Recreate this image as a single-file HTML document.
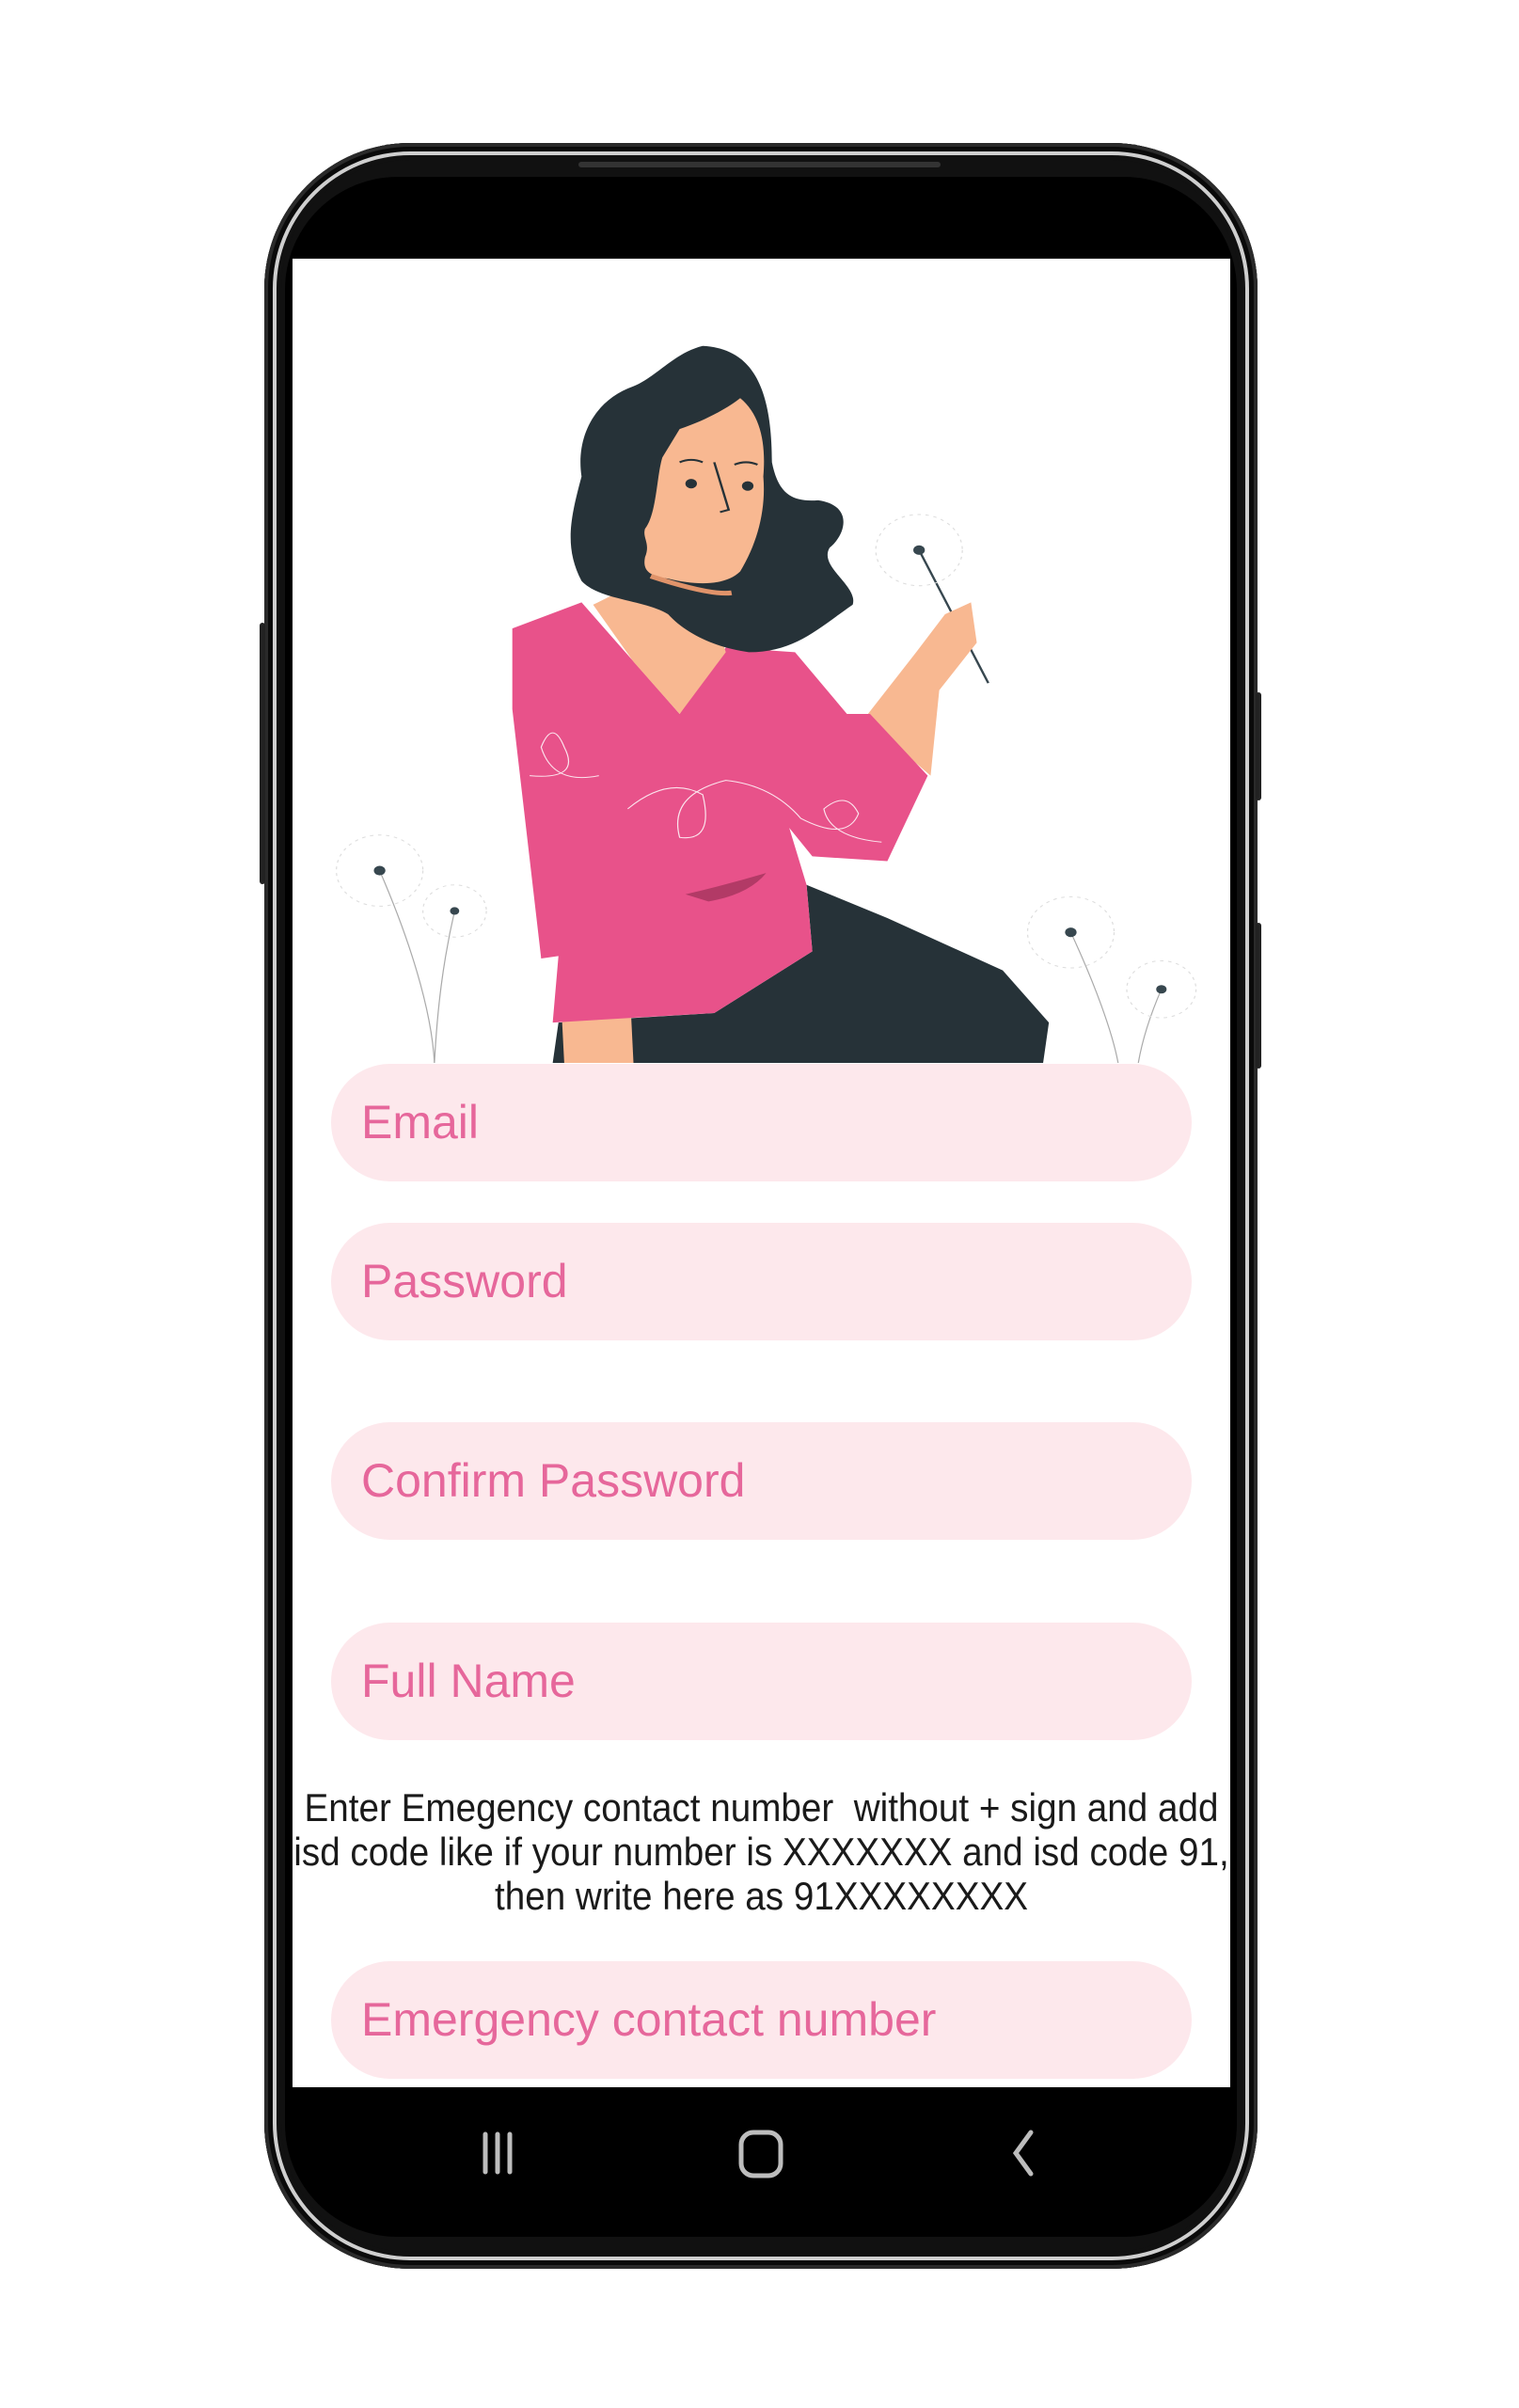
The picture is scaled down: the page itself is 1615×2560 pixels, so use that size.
<!DOCTYPE html>
<html><head><meta charset="utf-8">
<style>
html,body{margin:0;padding:0;background:#fff;}
body{width:1615px;height:2560px;position:relative;overflow:hidden;font-family:"Liberation Sans",sans-serif;}
.phone{position:absolute;left:281px;top:152px;width:1056px;height:2260px;border-radius:155px;background:#111;box-shadow:inset 0 0 0 4px #2a2a2a,inset 0 0 0 9px #0a0a0a,inset 0 0 0 13px #cfcfcf,inset 0 0 0 18px #111;}
.bezel{position:absolute;left:303px;top:188px;width:1012px;height:2190px;border-radius:120px;background:#000;}
.screen{position:absolute;left:311px;top:275px;width:997px;height:1944px;background:#fff;overflow:hidden;}
.field{position:absolute;left:41px;width:915px;height:125px;border-radius:63px;background:#fde8ec;color:#e6679b;font-size:50px;line-height:125px;padding-left:32px;box-sizing:border-box;font-family:"Liberation Sans",sans-serif;}
.help{position:absolute;left:-100px;width:1197px;text-align:center;color:#1a1a1a;font-size:42px;line-height:47px;white-space:pre;}
.help div{transform:scaleX(0.92);}
</style></head><body>
<div class="phone"></div>
<div style="position:absolute;left:276px;top:662px;width:6px;height:278px;background:#222;border-radius:3px"></div>
<div style="position:absolute;left:1335px;top:736px;width:6px;height:115px;background:#222;border-radius:3px"></div>
<div style="position:absolute;left:1335px;top:981px;width:6px;height:155px;background:#222;border-radius:3px"></div>
<div class="bezel"></div>
<div style="position:absolute;left:615px;top:172px;width:385px;height:6px;background:#333;border-radius:3px"></div>
<div class="screen">
<svg style="position:absolute;left:19px;top:65px" width="960" height="790" viewBox="0 0 1565 1565" preserveAspectRatio="none">
 <g stroke="#aaa" stroke-width="2" fill="none">
  <path d="M120 1160 C170 1300 210 1450 215 1565"/><path d="M250 1245 C230 1350 220 1450 215 1565"/>
  <path d="M1318 1290 C1360 1400 1390 1500 1400 1565"/><path d="M1475 1410 C1450 1480 1440 1530 1435 1565"/>
  <path d="M1055 485 L1175 765" stroke="#37474f" stroke-width="4"/>
  <circle cx="120" cy="1160" r="75" stroke="#ddd" stroke-dasharray="6 8"/>
  <circle cx="250" cy="1245" r="55" stroke="#ddd" stroke-dasharray="6 8"/>
  <circle cx="1318" cy="1290" r="75" stroke="#ddd" stroke-dasharray="6 8"/>
  <circle cx="1475" cy="1410" r="60" stroke="#ddd" stroke-dasharray="6 8"/>
  <circle cx="1055" cy="485" r="75" stroke="#ddd" stroke-dasharray="6 8"/>
 </g>
 <g fill="#37474f"><circle cx="120" cy="1160" r="10"/><circle cx="250" cy="1245" r="8"/><circle cx="1318" cy="1290" r="10"/><circle cx="1475" cy="1410" r="9"/><circle cx="1055" cy="485" r="10"/></g>
 <path fill="#263238" d="M860 1190 L1000 1260 L1200 1370 L1280 1480 L1270 1565 L420 1565 L430 1480 L700 1460 L870 1330Z"/>
 <path fill="#f8b891" d="M430 1330 L550 1320 L560 1565 L440 1565Z"/>
 <path fill="#f8b891" d="M960 840 L1050 700 L1100 620 L1145 595 L1155 680 L1090 780 L1075 960Z"/>
 <path fill="#e8528a" d="M350 650 L470 595 L640 830 L720 690 L840 700 L930 830 L970 830 L1070 960 L1000 1140 L870 1130 L830 1070 L860 1190 L870 1330 L700 1460 L420 1480 L430 1340 L400 1345 L350 820Z"/>
 <path fill="#b23a66" d="M650 1210 Q720 1190 790 1165 Q760 1210 690 1225Z"/>
 <path fill="#f8b891" d="M490 600 L590 540 L700 620 L720 700 L640 830 L560 720Z"/>
 <path fill="#263238" d="M680 55 C760 60 800 130 800 300 C810 360 830 385 880 380 C940 390 930 450 900 480 C880 520 950 560 940 600 C880 650 840 700 760 700 C700 690 650 660 620 620 C580 590 500 590 470 550 C440 480 450 420 470 330 C460 250 490 170 560 140 C600 120 630 70 680 55Z"/>
 <path fill="#f8b891" d="M640 230 C690 210 730 180 745 165 C780 200 790 260 785 330 C790 400 775 470 745 530 C720 560 670 560 620 545 C590 540 575 530 580 500 C590 470 575 460 580 440 C600 410 600 330 610 290Z"/>
 <path d="M590 540 C640 560 700 580 730 575" stroke="#e0936a" stroke-width="10" fill="none"/>
 <g fill="#263238"><circle cx="660" cy="345" r="10"/><circle cx="758" cy="350" r="10"/></g>
 <path d="M700 300 L725 400 L710 405 M640 300 Q660 290 680 300 M735 305 Q755 295 775 305" stroke="#263238" stroke-width="4" fill="none"/>
 <g stroke="#fff" stroke-width="2" fill="none" opacity=".85">
  <path d="M380 960 Q470 970 440 900 Q420 840 400 900 Q420 980 500 960"/>
  <path d="M550 1030 Q620 960 680 1000 Q700 1100 640 1090 Q620 1000 720 970 Q800 980 850 1050 Q930 1100 950 1040 Q930 990 890 1030 Q900 1090 990 1100"/>
 </g>
</svg>
<div class="field" style="top:856px">Email</div>
<div class="field" style="top:1025px">Password</div>
<div class="field" style="top:1237px">Confirm Password</div>
<div class="field" style="top:1450px">Full Name</div>
<div class="help" style="top:1623px"><div>Enter Emegency contact number  without + sign and add</div><div>isd code like if your number is XXXXXXX and isd code 91,</div><div>then write here as 91XXXXXXXX</div></div>
<div class="field" style="top:1810px">Emergency contact number</div>
</div>
<svg style="position:absolute;left:486px;top:2247px" width="650" height="90">
 <g stroke="#bdbdbd" stroke-width="5" fill="none" stroke-linecap="round">
  <path d="M30 22 V62 M43 22 V62 M56 22 V62"/>
  <rect x="302" y="20" width="42" height="46" rx="13"/>
  <path d="M610 20 L594 42 L610 64"/>
 </g>
</svg>
</body></html>
